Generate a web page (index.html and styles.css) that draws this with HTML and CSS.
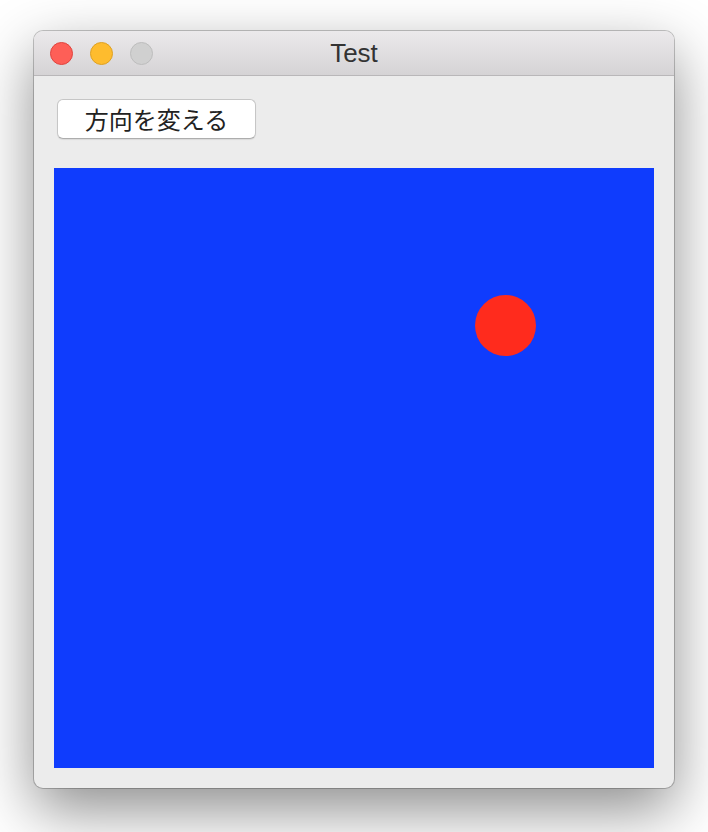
FILE: index.html
```html
<!DOCTYPE html>
<html lang="ja">
<head>
<meta charset="utf-8">
<title>Test</title>
<link rel="stylesheet" href="styles.css">
</head>
<body>
<div class="window">
  <div class="titlebar">
    <div class="lights">
      <span class="light red"></span>
      <span class="light yellow"></span>
      <span class="light gray"></span>
    </div>
    <div class="title">Test</div>
  </div>
  <div class="content">
    <div class="toolbar">
      <button class="btn">方向を変える</button>
    </div>
    <div class="canvas">
      <div class="ball"></div>
    </div>
  </div>
</div>
</body>
</html>
```
FILE: styles.css
```css
html, body {
  margin: 0;
  padding: 0;
  background: #ffffff;
}
body {
  width: 708px;
  height: 832px;
  overflow: hidden;
  padding: 31px 0 0 34px;
  box-sizing: border-box;
}
.window {
  width: 640px;
  height: 757px;
  background: #ececec;
  border-radius: 9px;
  box-shadow: 0 0 0 1px rgba(0,0,0,0.22), 0 22px 60px rgba(0,0,0,0.45);
  overflow: hidden;
  display: flex;
  flex-direction: column;
}
.titlebar {
  position: relative;
  height: 44px;
  flex: none;
  background: linear-gradient(#ebe9eb, #d5d3d5);
  border-bottom: 1px solid #b9b7b9;
  display: flex;
  align-items: center;
}
.lights {
  display: flex;
  gap: 17px;
  padding-left: 16px;
}
.light {
  width: 23px;
  height: 23px;
  border-radius: 50%;
  box-sizing: border-box;
}
.red { background: #fe5f57; border: 1px solid #e0443e; }
.yellow { background: #febc2e; border: 1px solid #dea123; }
.gray { background: #d0d0d0; border: 1px solid #bdbdbd; }
.title {
  position: absolute;
  left: 0;
  right: 0;
  top: 0;
  bottom: 0;
  display: flex;
  align-items: center;
  justify-content: center;
  font-family: "Liberation Sans", Arial, sans-serif;
  font-size: 26px;
  color: #333333;
  padding-top: 1px;
}
.content {
  padding: 23px 20px 20px 20px;
  display: flex;
  flex-direction: column;
}
.toolbar {
  padding-left: 3px;
  height: 40px;
  margin-bottom: 29px;
}
.btn {
  width: 199px;
  height: 40px;
  margin: 0;
  padding: 0;
  background: #ffffff;
  border: 1px solid #c6c6c6;
  border-bottom-color: #adadad;
  border-radius: 6px;
  box-shadow: 0 1px 1px rgba(0,0,0,0.08);
  font-family: "Noto Sans CJK JP", sans-serif;
  font-size: 24px;
  color: #222222;
  line-height: 38px;
}
.canvas {
  position: relative;
  width: 600px;
  height: 600px;
  background: #0f3cfd;
}
.ball {
  position: absolute;
  left: 421px;
  top: 127px;
  width: 61px;
  height: 61px;
  border-radius: 50%;
  background: #ff2b1d;
}
```
